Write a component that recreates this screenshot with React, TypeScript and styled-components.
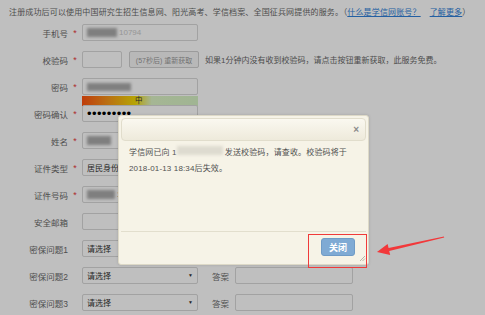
import React from 'react';
import styled, { createGlobalStyle } from 'styled-components';

const GlobalStyle = createGlobalStyle`
  html, body {
    margin: 0;
    padding: 0;
    background: #fff;
  }
  body {
    font-family: "Liberation Sans", "Noto Sans CJK SC", sans-serif;
  }
`;

const Page = styled.div`
  position: relative;
  width: 485px;
  height: 315px;
  overflow: hidden;
  background: #fff;
`;

const Notice = styled.div`
  padding: 7px 0 0 9px;
  height: 11px;
  font-size: 8px;
  line-height: 11px;
  letter-spacing: 0.15px;
  color: #686868;
  white-space: nowrap;
`;

const Link = styled.a<{ $gap?: number }>`
  color: #2f7fd8;
  text-decoration: underline;
  margin-right: ${(p) => p.$gap || 0}px;
`;

const Form = styled.div`
  display: flex;
  flex-direction: column;
  padding-top: 1px;
`;

const Row = styled.div`
  display: flex;
  align-items: center;
  height: 27px;
  padding-left: 8px;
`;

const Label = styled.div`
  width: 60px;
  text-align: right;
  font-size: 8.5px;
  color: #6a6a6a;
  white-space: nowrap;
`;

const Star = styled.div`
  width: 14px;
  text-align: center;
  font-size: 9px;
  color: #e83a3a;
`;

const Box = styled.div<{ $w?: number }>`
  position: relative;
  box-sizing: border-box;
  width: ${(p) => p.$w || 116}px;
  height: 17px;
  border: 1px solid #d8d8d8;
  border-radius: 2px;
  background: #fff;
  display: flex;
  align-items: center;
  padding-left: 4px;
  font-size: 8px;
  color: #333;
  white-space: nowrap;
`;

const Blur = styled.span<{ $w: number; $h?: number; $c?: string }>`
  display: inline-block;
  width: ${(p) => p.$w}px;
  height: ${(p) => p.$h || 9}px;
  background: ${(p) => p.$c || '#b9b9b9'};
  filter: blur(1.4px);
  margin-right: 2px;
`;

const Faint = styled.span`
  color: #c9c9c9;
  font-size: 8px;
`;

const CodeButton = styled.div`
  box-sizing: border-box;
  margin-left: 7px;
  width: 70px;
  height: 17px;
  border: 1px solid #cfcfcf;
  border-radius: 2px;
  background: #f6f6f6;
  color: #9a9a9a;
  font-size: 7px;
  display: flex;
  align-items: center;
  justify-content: center;
  white-space: nowrap;
`;

const Hint = styled.div`
  margin-left: 6px;
  font-size: 8px;
  color: #686868;
  white-space: nowrap;
`;

const Strength = styled.div`
  position: absolute;
  left: -1px;
  top: 17px;
  width: 116px;
  height: 10px;
  background: linear-gradient(
    90deg,
    #ff5210 0%,
    #f9951a 22%,
    #f2dc06 46%,
    #e9e35a 52%,
    #dcf3c6 60%,
    #d6f2c4 100%
  );
  font-size: 7.5px;
  line-height: 10px;
  color: #333;
  text-indent: 53px;
`;

const Dots = styled.span`
  font-family: "Liberation Sans", sans-serif;
  font-size: 13px;
  line-height: 10px;
  letter-spacing: 0.4px;
  color: #000;
`;

const Arrow = styled.span`
  position: absolute;
  right: 4px;
  top: 4px;
  font-size: 5px;
  color: #333;
`;

const AnswerLabel = styled.div`
  margin: 0 6px 0 14px;
  font-size: 8.5px;
  color: #6a6a6a;
`;

const Overlay = styled.div`
  position: absolute;
  inset: 0;
  background: rgba(0, 0, 0, 0.25);
`;

const Dialog = styled.div`
  position: absolute;
  left: 118px;
  top: 115px;
  width: 251px;
  height: 150px;
  box-sizing: border-box;
  padding: 2px;
  background: #f6f3e7;
  border: 1px solid #ddd9c7;
  border-radius: 3px;
  box-shadow: 0 0 3px rgba(0, 0, 0, 0.15);
  display: flex;
  flex-direction: column;
`;

const DialogHeader = styled.div`
  box-sizing: border-box;
  height: 23px;
  border: 1px solid #e1ddcc;
  border-radius: 4px;
  background: linear-gradient(#faf8f0, #eeeadb);
  display: flex;
  justify-content: flex-end;
  align-items: center;
  padding-right: 6px;
`;

const CloseX = styled.span`
  font-size: 10px;
  font-weight: bold;
  color: #8a8a8a;
  line-height: 10px;
`;

const DialogBody = styled.div`
  flex: 1;
  padding: 4px 8px 0;
  font-size: 8px;
  line-height: 16px;
  letter-spacing: 0.15px;
  color: #505050;
  white-space: nowrap;
`;

const DialogFooter = styled.div`
  position: relative;
  height: 31px;
  box-sizing: border-box;
  border-top: 1px solid #e2decd;
  display: flex;
  justify-content: flex-end;
  align-items: flex-start;
  padding: 6px 11px 0 0;
`;

const CloseButton = styled.button`
  box-sizing: border-box;
  width: 34px;
  height: 18px;
  padding: 0;
  border: 1px solid #6f9bc6;
  border-radius: 3px;
  background: #7faad4;
  color: #fff;
  font-family: "Liberation Sans", "Noto Sans CJK SC", sans-serif;
  font-size: 9px;
  font-weight: bold;
`;

const Grip = styled.svg`
  position: absolute;
  right: 0;
  bottom: 0;
`;

const Callout = styled.div`
  position: absolute;
  left: 308px;
  top: 234px;
  width: 59px;
  height: 34px;
  box-sizing: border-box;
  border: 1.5px solid #f03a3a;
`;

const Pointer = styled.svg`
  position: absolute;
  left: 370px;
  top: 230px;
`;

const Select = ({ text }: { text: string }) => (
  <Box>
    {text}
    <Arrow>▼</Arrow>
  </Box>
);

const QuestionRow = ({ n }: { n: number }) => (
  <Row>
    <Label>密保问题{n}</Label>
    <Star />
    <Select text="请选择" />
    <AnswerLabel>答案</AnswerLabel>
    <Box $w={118} />
  </Row>
);

export default function App() {
  return (
    <Page>
      <GlobalStyle />
      <Notice>
        注册成功后可以使用中国研究生招生信息网、阳光高考、学信档案、全国征兵网提供的服务。（
        <Link $gap={9}>什么是学信网账号？</Link>
        <Link>了解更多</Link>）
      </Notice>
      <Form>
        <Row>
          <Label>手机号</Label>
          <Star>*</Star>
          <Box>
            <Blur $w={30} $c="#aaa" />
            <Faint>10794</Faint>
          </Box>
        </Row>
        <Row>
          <Label>校验码</Label>
          <Star>*</Star>
          <Box $w={40} />
          <CodeButton>(57秒后) 重新获取</CodeButton>
          <Hint>如果1分钟内没有收到校验码，请点击按钮重新获取，此服务免费。</Hint>
        </Row>
        <Row>
          <Label>密码</Label>
          <Star>*</Star>
          <Box>
            <Blur $w={44} $h={8} $c="#aaa" />
            <Strength>中</Strength>
          </Box>
        </Row>
        <Row>
          <Label>密码确认</Label>
          <Star>*</Star>
          <Box>
            <Dots>•••••••••</Dots>
          </Box>
        </Row>
        <Row>
          <Label>姓名</Label>
          <Star>*</Star>
          <Box>
            <Blur $w={24} $c="#aaa" />
          </Box>
        </Row>
        <Row>
          <Label>证件类型</Label>
          <Star>*</Star>
          <Box>居民身份证</Box>
        </Row>
        <Row>
          <Label>证件号码</Label>
          <Star>*</Star>
          <Box>
            <Blur $w={28} $c="#aaa" />
            1
          </Box>
        </Row>
        <Row>
          <Label>安全邮箱</Label>
          <Star />
          <Box />
        </Row>
        <QuestionRow n={1} />
        <QuestionRow n={2} />
        <QuestionRow n={3} />
      </Form>
      <Overlay />
      <Dialog>
        <DialogHeader>
          <CloseX>×</CloseX>
        </DialogHeader>
        <DialogBody>
          学信网已向 1<Blur $w={46} $h={9} $c="#dedbd0" />发送校验码，请查收。校验码将于
          <br />
          2018-01-13 18:34后失效。
        </DialogBody>
        <DialogFooter>
          <CloseButton>关闭</CloseButton>
          <Grip width="7" height="7" viewBox="0 0 7 7">
            <path d="M6 1L1 6M6 3.5L3.5 6" stroke="#a8a597" strokeWidth="0.8" />
          </Grip>
        </DialogFooter>
      </Dialog>
      <Callout />
      <Pointer width="80" height="30" viewBox="0 0 80 30">
        <polygon
          points="7,22 17.6,14 18.6,17.9 74,6.4 74.2,7.6 19.2,20.9 20.2,25"
          fill="#f2383a"
        />
      </Pointer>
    </Page>
  );
}
